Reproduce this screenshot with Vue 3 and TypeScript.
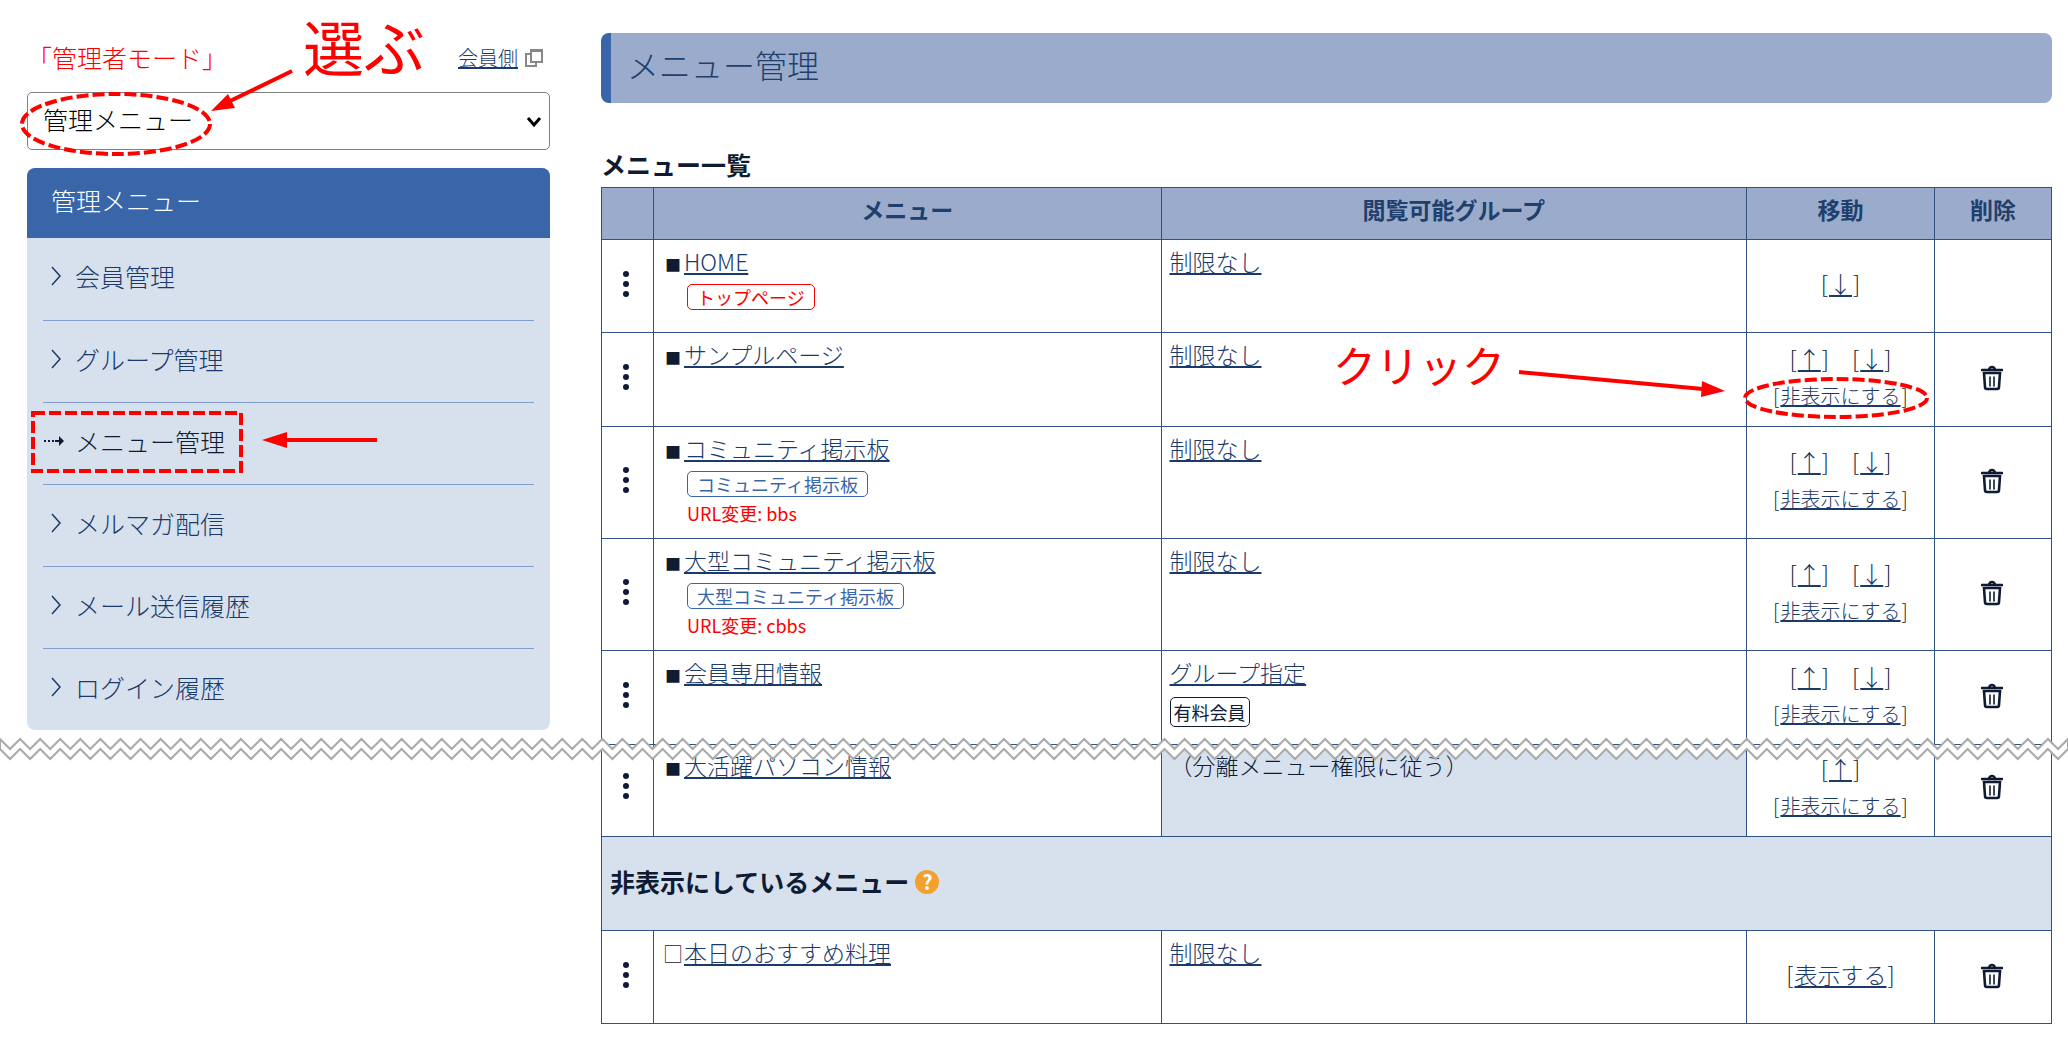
<script setup lang="ts">
import { computed, ref } from 'vue'

interface NavItem {
  label: string
  active?: boolean
}

interface MenuRow {
  id: string
  title: string
  badge?: string
  badgeTone?: 'red' | 'blue'
  url?: string
  group: string
  groupTag?: string
  inherited?: boolean
  up?: boolean
  down?: boolean
  canHide?: boolean
  canDelete?: boolean
  marked?: boolean
  joined?: boolean
}

const mode = ref('管理メニュー')

const navItems: NavItem[] = [
  { label: '会員管理' },
  { label: 'グループ管理' },
  { label: 'メニュー管理', active: true },
  { label: 'メルマガ配信' },
  { label: 'メール送信履歴' },
  { label: 'ログイン履歴' },
]

const rows: MenuRow[] = [
  { id: 'home', title: 'HOME', badge: 'トップページ', badgeTone: 'red', group: '制限なし', down: true },
  { id: 'sample', title: 'サンプルページ', group: '制限なし', up: true, down: true, canHide: true, canDelete: true, marked: true },
  { id: 'bbs', title: 'コミュニティ掲示板', badge: 'コミュニティ掲示板', badgeTone: 'blue', url: 'bbs', group: '制限なし', up: true, down: true, canHide: true, canDelete: true },
  { id: 'cbbs', title: '大型コミュニティ掲示板', badge: '大型コミュニティ掲示板', badgeTone: 'blue', url: 'cbbs', group: '制限なし', up: true, down: true, canHide: true, canDelete: true },
  { id: 'members', title: '会員専用情報', group: 'グループ指定', groupTag: '有料会員', up: true, down: true, canHide: true, canDelete: true },
  { id: 'pc', title: '大活躍パソコン情報', group: '（分離メニュー権限に従う）', inherited: true, up: true, canHide: true, canDelete: true, joined: true },
]

// Torn-paper strip: two parallel zigzag edges, 103 teeth across the page.
const teeth = 103
const tornPath = computed(() => {
  const step = 2068 / teeth / 2
  const top: string[] = []
  const bottom: string[] = []
  for (let i = 0; i <= teeth * 2; i++) {
    const x = (i * step).toFixed(1)
    const low = i % 2 === 1
    top.push(`${x},${low ? 12 : 2}`)
    bottom.unshift(`${x},${low ? 22 : 12}`)
  }
  return `M${top.join('L')}L${bottom.join('L')}Z`
})
</script>

<template>
  <div class="page">
    <aside class="sidebar">
      <div class="mode-line">
        <span class="mode-name">「管理者モード」</span>
        <a class="member-link" href="#">
          <span class="member-text">会員側</span>
          <svg class="window-icon" viewBox="0 0 20 20" aria-hidden="true">
            <path d="M7 2h11v12H7zM7 6H2v12h10v-4" />
            <path class="window-bar" d="M7 3h11" />
          </svg>
        </a>
        <span class="note note-choose">選ぶ</span>
      </div>

      <div class="mode-select">
        <select v-model="mode" aria-label="表示モード">
          <option>管理メニュー</option>
        </select>
        <svg class="select-arrow" viewBox="0 0 16 12" aria-hidden="true"><path d="M2 2l6 7 6-7" /></svg>
        <svg class="mark mark-choose" viewBox="0 0 280 100" aria-hidden="true">
          <ellipse class="dashed" cx="98" cy="62" rx="94" ry="30" />
          <path class="shaft" d="M274 9L210 40" />
          <path class="head" d="M193 49l17-17 7 14z" />
        </svg>
      </div>

      <nav class="panel">
        <h2 class="panel-title">管理メニュー</h2>
        <ul class="nav-list">
          <li v-for="item in navItems" :key="item.label" class="nav-item">
            <a href="#" :class="['nav-link', { active: item.active }]">
              <svg v-if="item.active" class="nav-icon" viewBox="0 0 24 24" aria-hidden="true">
                <path class="dots" d="M1 12h2M5 12h2M9 12h2" />
                <path class="line" d="M12 12h5" />
                <path class="tip" d="M16 7l5 5-5 5z" />
              </svg>
              <svg v-else class="nav-icon" viewBox="0 0 24 24" aria-hidden="true">
                <path class="chevron" d="M9 3l8 9-8 9" />
              </svg>
              <span>{{ item.label }}</span>
            </a>
            <svg v-if="item.active" class="mark mark-nav" viewBox="0 0 352 66" aria-hidden="true">
              <rect class="dashed" x="4" y="4" width="208" height="58" />
              <path class="shaft" d="M348 31h-93" />
              <path class="head" d="M233 31l25-8v16z" />
            </svg>
          </li>
        </ul>
      </nav>
    </aside>

    <main class="main">
      <h1 class="page-title">メニュー管理</h1>
      <h2 class="list-title">メニュー一覧</h2>

      <table class="menu-table">
        <colgroup>
          <col class="c-handle" />
          <col class="c-menu" />
          <col />
          <col class="c-move" />
          <col class="c-delete" />
        </colgroup>
        <thead>
          <tr>
            <th></th>
            <th>メニュー</th>
            <th>閲覧可能グループ</th>
            <th>移動</th>
            <th>削除</th>
          </tr>
        </thead>
        <tbody>
          <tr v-for="row in rows" :key="row.id" :class="{ joined: row.joined }">
            <td class="handle">
              <svg class="dots-icon" viewBox="0 0 8 28" aria-hidden="true">
                <circle cx="4" cy="4" r="3" /><circle cx="4" cy="14" r="3" /><circle cx="4" cy="24" r="3" />
              </svg>
            </td>
            <td>
              <div class="title-line"><span class="bullet">■</span><a href="#">{{ row.title }}</a></div>
              <div v-if="row.badge" class="badge-line">
                <span :class="['badge', row.badgeTone]">{{ row.badge }}</span>
              </div>
              <div v-if="row.url" class="url-line">URL変更: {{ row.url }}</div>
            </td>
            <td :class="{ inherited: row.inherited }">
              <div class="title-line">
                <template v-if="row.inherited">{{ row.group }}</template>
                <a v-else href="#">{{ row.group }}</a>
              </div>
              <div v-if="row.groupTag" class="tag-line"><span class="tag">{{ row.groupTag }}</span></div>
            </td>
            <td class="move">
              <div>
                <span v-if="row.up">[<a href="#" aria-label="上へ移動">↑</a>]</span>
                <template v-if="row.up && row.down">　</template>
                <span v-if="row.down">[<a href="#" aria-label="下へ移動">↓</a>]</span>
              </div>
              <div v-if="row.canHide" class="hide-line">[<a href="#">非表示にする</a>]</div>
              <template v-if="row.marked">
                <span class="note note-click">クリック</span>
                <svg class="mark mark-click" viewBox="0 0 416 60" aria-hidden="true">
                  <path class="shaft" d="M2 9l184 17" />
                  <path class="head" d="M208 28l-24 6 1-16z" />
                  <ellipse class="dashed" cx="319" cy="35" rx="91" ry="19" />
                </svg>
              </template>
            </td>
            <td class="delete">
              <button v-if="row.canDelete" type="button" class="trash" aria-label="削除">
                <svg viewBox="0 0 22 26" aria-hidden="true">
                  <path d="M1 5h20" /><path d="M8 5a3 3 0 0 1 6 0" />
                  <path d="M3 9h16l-1 14a2 2 0 0 1-2 2H6a2 2 0 0 1-2-2z" transform="translate(0 -1)" />
                  <path class="thin" d="M9 12v9M13 12v9" />
                </svg>
              </button>
            </td>
          </tr>
          <tr>
            <th colspan="5" class="section" scope="colgroup">
              <div class="section-inner">
                <span>非表示にしているメニュー</span>
                <button type="button" class="help" aria-label="ヘルプ">?</button>
              </div>
            </th>
          </tr>
          <tr>
            <td class="handle">
              <svg class="dots-icon" viewBox="0 0 8 28" aria-hidden="true">
                <circle cx="4" cy="4" r="3" /><circle cx="4" cy="14" r="3" /><circle cx="4" cy="24" r="3" />
              </svg>
            </td>
            <td>
              <div class="title-line"><span class="bullet hollow">□</span><a href="#">本日のおすすめ料理</a></div>
            </td>
            <td><div class="title-line"><a href="#">制限なし</a></div></td>
            <td class="move"><div>[<a href="#">表示する</a>]</div></td>
            <td class="delete">
              <button type="button" class="trash" aria-label="削除">
                <svg viewBox="0 0 22 26" aria-hidden="true">
                  <path d="M1 5h20" /><path d="M8 5a3 3 0 0 1 6 0" />
                  <path d="M3 9h16l-1 14a2 2 0 0 1-2 2H6a2 2 0 0 1-2-2z" transform="translate(0 -1)" />
                  <path class="thin" d="M9 12v9M13 12v9" />
                </svg>
              </button>
            </td>
          </tr>
        </tbody>
      </table>
    </main>

    <svg class="torn" viewBox="0 0 2068 24" preserveAspectRatio="none" aria-hidden="true">
      <path :d="tornPath" />
    </svg>
  </div>
</template>

<style>
body {
  margin: 0;
  background: #fff;
}
</style>

<style scoped>
.page {
  position: relative;
  display: grid;
  grid-template-columns: minmax(0, 523fr) minmax(0, 1451fr);
  column-gap: 51px;
  padding: 0 16px 22px 27px;
  overflow: hidden;
  font-family: "Noto Sans CJK JP", sans-serif;
  font-weight: 300;
  font-size: 25px;
  color: #0f1b33;
}

a {
  color: #1a3a6a;
}

.note,
.mark {
  position: absolute;
  pointer-events: none;
}

.note {
  color: #f00;
  font-weight: 400;
  white-space: nowrap;
}

.dashed {
  fill: none;
  stroke: #f00;
  stroke-width: 4;
  stroke-dasharray: 12 4;
}

.shaft {
  fill: none;
  stroke: #f00;
  stroke-width: 4;
}

.head {
  fill: #f00;
}

.sidebar {
  padding-top: 42px;
}

.mode-line {
  position: relative;
  display: flex;
  justify-content: space-between;
  align-items: center;
  height: 30px;
  line-height: 30px;
  margin-bottom: 20px;
}

.mode-name {
  color: #f00;
}

.member-link {
  display: flex;
  align-items: center;
  gap: 6px;
  padding: 2px 6px 0 0;
  font-size: 20px;
  text-decoration: none;
}

.member-text {
  text-decoration: underline;
}

.window-icon {
  width: 20px;
  height: 20px;
  fill: none;
  stroke: #888;
  stroke-width: 2;
}

.note-choose {
  left: 276px;
  top: -26px;
  font-size: 61px;
  line-height: 60px;
}

.mode-select {
  position: relative;
  margin-bottom: 18px;
}

.mode-select select {
  display: block;
  appearance: none;
  box-sizing: border-box;
  width: 100%;
  height: 58px;
  padding: 0 40px 4px 15px;
  border: 1px solid #808080;
  border-radius: 5px;
  background: #fff;
  color: #000;
  font: inherit;
}

.select-arrow {
  position: absolute;
  right: 8px;
  top: 24px;
  width: 16px;
  height: 12px;
  fill: none;
  stroke: #000;
  stroke-width: 3;
  pointer-events: none;
}

.mark-choose {
  left: -9px;
  top: -30px;
  width: 280px;
  height: 100px;
}

.panel {
  border-radius: 8px;
  background: #d7e1ed;
}

.panel-title {
  margin: 0;
  height: 70px;
  padding-left: 24px;
  border-radius: 8px 8px 0 0;
  background: #3866a8;
  color: #fff;
  font-size: 25px;
  font-weight: 300;
  line-height: 64px;
}

.nav-list {
  margin: 0;
  padding: 0 16px;
  list-style: none;
}

.nav-item {
  position: relative;
  box-sizing: border-box;
  height: 82px;
}

.nav-item + .nav-item {
  border-top: 1px solid #7f9fcc;
}

.nav-link {
  display: flex;
  align-items: center;
  gap: 8px;
  height: 76px;
  color: #1a3a6a;
  text-decoration: none;
}

.nav-link.active {
  color: #0f1b33;
}

.nav-icon {
  width: 24px;
  height: 24px;
  fill: none;
  stroke: currentColor;
  stroke-width: 2;
}

.nav-icon .chevron {
  stroke-width: 1.5;
}

.nav-icon .tip {
  fill: currentColor;
  stroke: none;
}

.mark-nav {
  left: -14px;
  top: 6px;
  width: 352px;
  height: 66px;
}

.main {
  padding-top: 33px;
}

.page-title {
  margin: 0;
  height: 70px;
  padding-left: 16px;
  border-left: 10px solid #3866a8;
  border-radius: 8px;
  background: #9aabcc;
  color: #1f3f6c;
  font-size: 32px;
  font-weight: 300;
  line-height: 62px;
}

.list-title {
  margin: 43px 0 5px;
  font-size: 25px;
  font-weight: 700;
  line-height: 36px;
}

.menu-table {
  width: 100%;
  table-layout: fixed;
  border-collapse: collapse;
  font-size: 23px;
}

.c-handle {
  width: 52px;
}

.c-menu {
  width: 35%;
}

.c-move {
  width: 188px;
}

.c-delete {
  width: 117px;
}

.menu-table th,
.menu-table td {
  border: 1px solid #2f5283;
}

.menu-table thead th {
  height: 42px;
  padding: 0 0 9px;
  background: #9aabcc;
  color: #1f3f6c;
  font-weight: 700;
  line-height: 34px;
}

.menu-table td {
  position: relative;
  height: 73px;
  padding: 6px 8px 13px;
  vertical-align: top;
}

.menu-table .handle,
.menu-table .move,
.menu-table .delete {
  text-align: center;
  vertical-align: middle;
}

.menu-table .move {
  padding-top: 7px;
  padding-bottom: 12px;
}

.menu-table .handle {
  padding: 9px 11px 10px 8px;
}

.menu-table .delete {
  padding: 9px 10px 10px 8px;
}

.menu-table .joined td {
  height: 72px;
  padding-top: 5px;
}

.menu-table .joined .move {
  padding-top: 5px;
  padding-bottom: 12px;
}

.dots-icon {
  display: block;
  width: 8px;
  height: 28px;
  margin: 0 auto 4px;
  fill: #0f1b33;
}

.title-line {
  line-height: 30px;
}

.bullet {
  display: inline-block;
  width: 22px;
  font-size: 16px;
  text-align: center;
}

.bullet.hollow {
  font-size: 20px;
}

.badge-line {
  display: flex;
  padding: 5px 0 0 25px;
}

.badge {
  padding: 0 9px;
  border: 1px solid;
  border-radius: 5px;
  font-size: 18px;
  font-weight: 400;
  line-height: 24px;
}

.badge.red {
  color: #f00;
}

.badge.blue {
  color: #3866a8;
}

.url-line {
  padding: 4px 0 0 25px;
  color: #f00;
  font-size: 18px;
  font-weight: 400;
  line-height: 24px;
}

.inherited {
  background: #d7e1ed;
}

.tag-line {
  display: flex;
  padding-top: 10px;
}

.tag {
  padding: 0 3px;
  border: 1px solid #0f1b33;
  border-radius: 5px;
  font-size: 18px;
  font-weight: 400;
  line-height: 28px;
}

.move > div {
  line-height: 37px;
}

.move a {
  margin: 0 1px;
}

.move .hide-line {
  font-size: 20px;
}

.note-click {
  right: 429px;
  top: 10px;
  font-size: 43px;
  line-height: 42px;
}

.mark-click {
  right: 1px;
  top: 30px;
  width: 416px;
  height: 60px;
}

.trash {
  display: block;
  width: 22px;
  height: 26px;
  margin: 0 auto 2px;
  padding: 0;
  border: 0;
  background: none;
}

.trash svg {
  display: block;
  width: 22px;
  height: 26px;
  fill: none;
  stroke: #0f1b33;
  stroke-width: 2.6;
  stroke-linecap: round;
}

.trash .thin {
  stroke-width: 1.6;
}

.menu-table .section {
  height: 93px;
  padding: 0 8px;
  background: #d7e1ed;
  font-size: 25px;
  font-weight: 700;
  text-align: left;
}

.section-inner {
  display: flex;
  align-items: center;
  gap: 6px;
  padding-bottom: 6px;
}

.help {
  width: 24px;
  height: 24px;
  margin-top: 2px;
  padding: 0;
  border: 0;
  border-radius: 50%;
  background: #f3a12c;
  color: #fff;
  font: 700 20px/24px "Noto Sans CJK JP", sans-serif;
}

.torn {
  position: absolute;
  left: 0;
  top: 737px;
  width: 100%;
  height: 24px;
  fill: #fff;
  stroke: #aaa;
  stroke-width: 2;
}
</style>
